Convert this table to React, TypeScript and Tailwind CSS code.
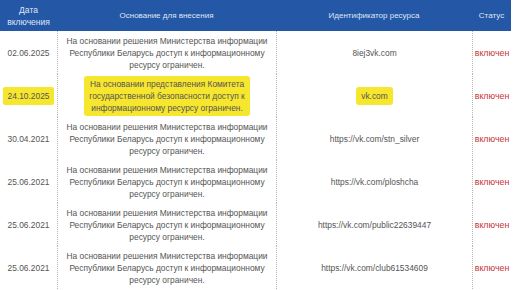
import React from "react";

type Row = {
  date: string;
  text: string[];
  res: string;
  hl?: boolean;
};

const std = [
  "На основании решения Министерства информации",
  "Республики Беларусь доступ к информационному",
  "ресурсу ограничен.",
];

const rows: Row[] = [
  { date: "02.06.2025", text: std, res: "8iej3vk.com" },
  {
    date: "24.10.2025",
    text: [
      "На основании представления Комитета",
      "государственной безопасности доступ к",
      "информационному ресурсу ограничен.",
    ],
    res: "vk.com",
    hl: true,
  },
  { date: "30.04.2021", text: std, res: "https://vk.com/stn_silver" },
  { date: "25.06.2021", text: std, res: "https://vk.com/ploshcha" },
  { date: "25.06.2021", text: std, res: "https://vk.com/public22639447" },
  { date: "25.06.2021", text: std, res: "https://vk.com/club61534609" },
];

const font = { fontFamily: '"Liberation Sans", Arial, sans-serif' };

export default function App() {
  return (
    <div className="w-[520px] h-[290px] bg-white overflow-hidden" style={font}>
      <div className="w-[511px]">
        <div className="grid grid-cols-[57px_219px_196px_39px] h-[31px] bg-[#2457a6] text-[#dfe7f4] text-[8px] leading-[12px]">
          <div className="flex items-center justify-center text-center text-[8.5px]">
            Дата
            <br />
            включения
          </div>
          <div className="flex items-center justify-center">Основание для внесения</div>
          <div className="flex items-center justify-center">Идентификатор ресурса</div>
          <div className="flex items-center justify-center">Статус</div>
        </div>
        {rows.map((r, i) => (
          <div
            key={i}
            className="grid grid-cols-[57px_219px_196px_39px] h-[43px] text-[8.4px] leading-[12px] text-[#555555] whitespace-nowrap"
          >
            <div className="flex items-center justify-center">
              <span className={r.hl ? "bg-[#f7e62e] px-[5px] py-[3px] rounded-[2px]" : ""}>{r.date}</span>
            </div>
            <div className="flex items-center justify-center border-l border-dotted border-[#b5b5b5] text-center">
              <span className={r.hl ? "bg-[#f7e62e] px-[5px] py-[2px] rounded-[3px]" : ""}>
                {r.text.map((t, j) => (
                  <span key={j} className="block">
                    {t}
                  </span>
                ))}
              </span>
            </div>
            <div className="flex items-center justify-center border-l border-dotted border-[#b5b5b5]">
              <span className={r.hl ? "bg-[#f7e62e] px-[5px] py-[3px] rounded-[3px]" : ""}>{r.res}</span>
            </div>
            <div className="flex items-center justify-center border-l border-dotted border-[#b5b5b5] text-[#c8343a] text-[8.8px]">
              включен
            </div>
          </div>
        ))}
      </div>
    </div>
  );
}
